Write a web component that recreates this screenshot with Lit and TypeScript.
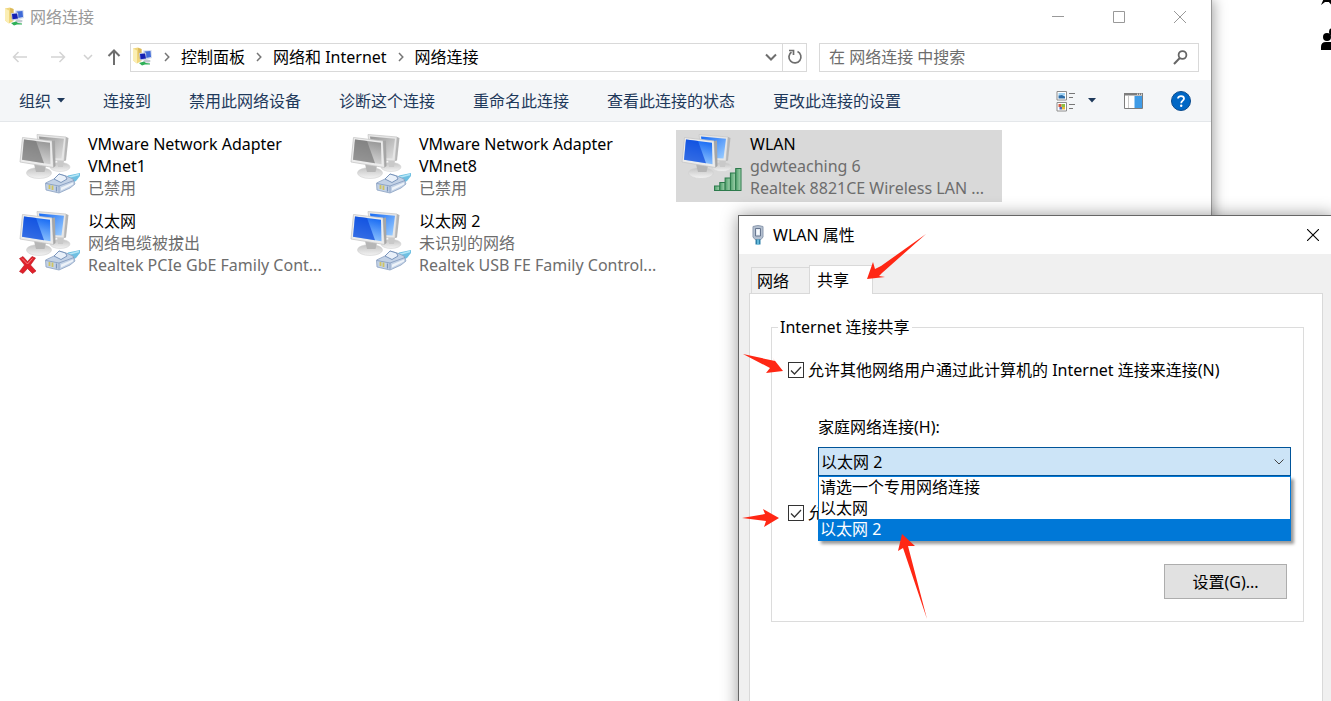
import { LitElement, html, svg, css, nothing } from "lit";
import { customElement, property } from "lit/decorators.js";

type IconKind = "disabled" | "unplugged" | "wired" | "wireless";

interface Connection {
  name: string;
  lines: string[];
  kind: IconKind;
  selected?: boolean;
}

const CONNECTIONS: Connection[] = [
  { name: "VMware Network Adapter VMnet1", lines: ["已禁用"], kind: "disabled" },
  { name: "VMware Network Adapter VMnet8", lines: ["已禁用"], kind: "disabled" },
  {
    name: "WLAN",
    lines: ["gdwteaching 6", "Realtek 8821CE Wireless LAN ..."],
    kind: "wireless",
    selected: true,
  },
  {
    name: "以太网",
    lines: ["网络电缆被拔出", "Realtek PCIe GbE Family Cont..."],
    kind: "unplugged",
  },
  {
    name: "以太网 2",
    lines: ["未识别的网络", "Realtek USB FE Family Control..."],
    kind: "wired",
  },
];

const COMMANDS = [
  "连接到",
  "禁用此网络设备",
  "诊断这个连接",
  "重命名此连接",
  "查看此连接的状态",
  "更改此连接的设置",
];

const folderIcon = html`<svg width="20" height="20" viewBox="0 0 20 20" aria-hidden="true">
  <path d="M0 1.500 5 0.500 8.500 2V14L4 16.500 0 13.500Z" fill="#f0d67c" />
  <path d="M0 1.500 4 3.500V16.500L0 13.500Z" fill="#fbeeb4" />
  <path d="M5 1 8.500 2V10L6 12Z" fill="#d9b75a" />
  <path d="M10 3.500 18.500 3 19 11 12 13Z" fill="#d5ddee" />
  <path d="M11.500 4.500 17.500 4 18 10 13 11Z" fill="#3f6ad8" />
  <path d="M6 6 13 5.500 13.500 12.500 7 13.500Z" fill="#c4cde4" />
  <path d="M7 7 12 6.500 13 11.500 7.500 12.300Z" fill="#1420b4" />
  <ellipse cx="14" cy="14" rx="3.500" ry="1.500" fill="#c3c9d0" />
  <path d="M6 16 11 14.500 13 16 17 16.500V17.500L12 17.500 9 18.500Z" fill="#2fb057" />
</svg>`;

const crumb = html`<svg class="crumb" width="6" height="10" viewBox="0 0 6 10" aria-hidden="true">
  <path d="M1 1 4.800 5 1 9" fill="none" stroke="#767676" stroke-width="1.500" />
</svg>`;

@customElement("connection-icon")
export class ConnectionIcon extends LitElement {
  @property() kind: IconKind = "wired";

  static styles = css`
    :host {
      display: block;
      flex: none;
    }
    svg {
      display: block;
    }
  `;

  private plug() {
    return svg`
      <path d="M44 50 50 43.500 62 41 62 44 58 49 50 53Z" fill="#6fc0e2"/>
      <path d="M50 45.500 61 42.500" stroke="#b4e6f7" stroke-width="1.500"/>
      <path d="M27.500 51 36 47 41 42 48 44 55 47 57 52 52 56 41 61 28 58Z" fill="#c3d2e6" stroke="#8aa1c2" stroke-width=".8"/>
      <path d="M36 47 41 42 47.500 44 49 47 43 50.500Z" fill="#e9f0f9" stroke="#6f8cb5" stroke-width=".9"/>
      <path d="M28 51.500 41 54 56 48.500M41 54V60.500" fill="none" stroke="#8098bd" stroke-width=".8"/>
      <path d="M43 55.500 55 50.500V52.500L43 58.500Z" fill="#eef3f9"/>
      <path d="M31.500 53V57M34.500 53.500V58" stroke="#cfc464" stroke-width="1.800"/>
      <path d="M38.500 54.500V59.500" stroke="#7c96bb" stroke-width="1.300"/>`;
  }

  private bars() {
    const tops = [54, 50.5, 46, 41, 36.5];
    return tops.map(
      (y, i) => svg`<rect x=${34.5 + i * 5.3} y=${y} width="5.300" height=${58.5 - y}
        fill="url(#bar)" stroke="#2d7a4c"/>`,
    );
  }

  render() {
    const off = this.kind === "disabled";
    const dark = off ? "#777" : "#0b46d8";
    const mid = off ? "#969696" : "#176af4";
    const light = off ? "#dedede" : "#9fd0ff";
    return html`<svg width="66" height="66" viewBox="0 0 66 66" aria-hidden="true">
      <defs>
        <linearGradient id="back" x1="0" y1="0" x2="1" y2="1">
          <stop offset="0" stop-color=${mid} />
          <stop offset="1" stop-color=${light} />
        </linearGradient>
        <linearGradient id="shine" x1="0.300" y1="1" x2="0.600" y2="0">
          <stop offset="0" stop-color=${light} />
          <stop offset="1" stop-color=${mid} />
        </linearGradient>
        <linearGradient id="stand" x1="0" y1="0" x2="0" y2="1">
          <stop offset="0" stop-color="#c2c2c2" />
          <stop offset="1" stop-color="#f3f3f3" />
        </linearGradient>
        <linearGradient id="bar" x1="0" y1="0" x2="1" y2="0">
          <stop offset="0" stop-color="#4fa06c" />
          <stop offset="1" stop-color="#a5d4b0" />
        </linearGradient>
      </defs>
      <ellipse cx="42" cy="35" rx="10" ry="4.500" fill="url(#stand)" stroke="#d4d4d4" stroke-width=".6" />
      <path d="M39 27 46 28 45 35 40 35Z" fill="#c9c9c9" />
      <path d="M19 2.500 48 5 46 29 22 28Z" fill="#e6e6e6" stroke="#c9c9c9" stroke-width=".8" />
      <path d="M48 5 50.500 6 48 28.500 46 29Z" fill="#b5b5b5" />
      <path d="M21 4.500 46 6.800 43.500 26.500 24 25.500Z" fill="url(#back)" />
      <ellipse cx="21" cy="41" rx="12.500" ry="5.500" fill="url(#stand)" stroke="#d0d0d0" stroke-width=".6" />
      <path d="M16 32 28 34 26.500 40 18 40Z" fill="#b6b6b6" />
      <path d="M4.500 5.500 34 9 35.500 35.500 2 30Z" fill="#ececec" stroke="#c6c6c6" stroke-width=".8" />
      <path d="M34 9 37 8.500 37.500 34 35.500 35.500Z" fill="#a6a6a6" />
      <path d="M6 7.500 32 10.800 32.500 32.300 4 27.800Z" fill="url(#shine)" />
      <path d="M6 7.500 18 9 26 31.200 4 27.800Z" fill=${dark} opacity=".7" />
      ${this.kind === "wireless" ? this.bars() : this.plug()}
      ${this.kind === "unplugged"
        ? svg`<path d="M1.500 49.500 5 47.500 9.500 52.500 14 47.500 17.500 49 12.500 56 18 62 14.500 64.500 9.500 59.500 5 64.500 1.500 62.500 6.500 56Z"
            fill="#e0202a" stroke="#b8141c" stroke-width=".6"/>
            <path d="M4 49.500 9.500 55 14.500 49.500" fill="none" stroke="#f47c80"/>`
        : nothing}
    </svg>`;
  }
}

@customElement("connections-window")
export class ConnectionsWindow extends LitElement {
  static styles = css`
    :host {
      display: flex;
      flex-direction: column;
      box-sizing: border-box;
      background: #fff;
      border-right: 1px solid #999;
      box-shadow: 2px 0 12px rgba(0, 0, 0, 0.35);
    }
    svg {
      display: block;
      flex: none;
    }
    button {
      font: inherit;
      color: inherit;
      background: none;
      border: 0;
      padding: 0;
      display: flex;
      align-items: center;
      justify-content: center;
    }
    .title {
      display: flex;
      align-items: center;
      height: 34px;
      padding: 0 3px 0 5px;
      gap: 5px;
      color: #999;
    }
    .title h1 {
      flex: 1;
      margin: 0;
      font-size: 16px;
      font-weight: 400;
    }
    .title button {
      width: 56px;
      height: 34px;
    }
    .nav {
      display: flex;
      align-items: center;
      height: 46px;
      padding: 0 12px;
    }
    .arrows {
      display: flex;
      align-items: center;
      width: 118px;
    }
    .back {
      width: 16px;
    }
    .forward {
      width: 16px;
      margin-left: 22px;
    }
    .recent {
      width: 10px;
      margin-left: 17px;
    }
    .up {
      width: 14px;
      margin-left: 14px;
    }
    .address {
      display: flex;
      align-items: center;
      flex: 1;
      min-width: 0;
      box-sizing: border-box;
      height: 29px;
      border: 1px solid #d9d9d9;
      padding-left: 2px;
      white-space: nowrap;
    }
    .address a {
      color: #000;
      text-decoration: none;
    }
    .crumb {
      margin: 0 11px;
    }
    .spacer {
      flex: 1;
    }
    .refresh {
      width: 24px;
      height: 27px;
      margin-left: 5px;
      border-left: 1px solid #d9d9d9;
    }
    .search {
      display: flex;
      align-items: center;
      box-sizing: border-box;
      width: 380px;
      height: 29px;
      margin-left: 12px;
      padding: 0 10px 0 9px;
      border: 1px solid #d9d9d9;
    }
    .search input {
      flex: 1;
      min-width: 0;
      border: 0;
      padding: 0;
      outline: 0;
      background: none;
      font: inherit;
    }
    .search input::placeholder {
      color: #6d6d6d;
      opacity: 1;
    }
    .toolbar {
      display: flex;
      align-items: center;
      gap: 38px;
      height: 41px;
      padding: 0 20px 0 19px;
      background: #f4f6f8;
      border-bottom: 1px solid #e4e7ea;
      color: #1e395b;
      white-space: nowrap;
    }
    .organize {
      gap: 6px;
    }
    .views {
      display: flex;
      align-items: center;
      gap: 28px;
      margin-left: auto;
    }
    .layout {
      gap: 12px;
    }
    .items {
      display: grid;
      grid-template-columns: repeat(auto-fill, 326px);
      gap: 5px;
      margin: 0;
      padding: 8px 14px;
      list-style: none;
    }
    .item {
      display: flex;
      box-sizing: border-box;
      height: 72px;
      padding: 2px 6px 0 4px;
      gap: 4px;
    }
    .selected {
      background: #d9d9d9;
    }
    .text {
      min-width: 0;
      padding-top: 1px;
      color: #6d6d6d;
    }
    .text p {
      margin: 0;
      white-space: nowrap;
    }
    .text .name {
      color: #000;
      white-space: normal;
    }
  `;

  render() {
    return html`
      <header class="title">
        ${folderIcon}
        <h1>网络连接</h1>
        <button aria-label="最小化">
          <svg width="12" height="12" viewBox="0 0 12 12"><path d="M0 5.500H12" stroke="#999" /></svg>
        </button>
        <button aria-label="最大化">
          <svg width="12" height="12" viewBox="0 0 12 12"><path d="M.5.5H11.500V11.500H.5Z" fill="none" stroke="#999" /></svg>
        </button>
        <button aria-label="关闭">
          <svg width="12" height="12" viewBox="0 0 12 12"><path d="M0 0 12 12M12 0 0 12" stroke="#999" /></svg>
        </button>
      </header>
      <nav class="nav">
        <div class="arrows">
          <button class="back" aria-label="后退">
            <svg width="16" height="12" viewBox="0 0 16 12"><path d="M15 6H1.500M6.500 1 1.500 6 6.500 11" fill="none" stroke="#d4d4d4" stroke-width="1.500" /></svg>
          </button>
          <button class="forward" aria-label="前进">
            <svg width="16" height="12" viewBox="0 0 16 12"><path d="M1 6H14.500M9.500 1 14.500 6 9.500 11" fill="none" stroke="#d4d4d4" stroke-width="1.500" /></svg>
          </button>
          <button class="recent" aria-label="最近位置">
            <svg width="10" height="6" viewBox="0 0 10 6"><path d="M1 1 5 5 9 1" fill="none" stroke="#d0d0d0" stroke-width="1.500" /></svg>
          </button>
          <button class="up" aria-label="上移">
            <svg width="14" height="16" viewBox="0 0 14 16"><path d="M7 16V1.500M1.500 7 7 1.500 12.500 7" fill="none" stroke="#6e6e6e" stroke-width="2" /></svg>
          </button>
        </div>
        <div class="address">
          ${folderIcon}${crumb}<a href="#panel">控制面板</a>${crumb}<a href="#internet">网络和 Internet</a>${crumb}<a href="#connections">网络连接</a>
          <span class="spacer"></span>
          <button aria-label="以前的位置">
            <svg width="12" height="8" viewBox="0 0 12 8"><path d="M1 1.500 6 6.500 11 1.500" fill="none" stroke="#6e6e6e" stroke-width="2" /></svg>
          </button>
          <button class="refresh" aria-label="刷新">
            <svg width="16" height="16" viewBox="0 0 16 16">
              <path d="M10.500 2.500A6 6 0 1 1 4.500 3" fill="none" stroke="#6e6e6e" stroke-width="1.700" />
              <path d="M2 1.500H6.500V6" fill="none" stroke="#6e6e6e" stroke-width="1.700" />
            </svg>
          </button>
        </div>
        <label class="search">
          <input type="text" placeholder="在 网络连接 中搜索" aria-label="搜索" />
          <svg width="15" height="15" viewBox="0 0 15 15">
            <circle cx="9.500" cy="5" r="3.900" fill="none" stroke="#666" stroke-width="1.800" />
            <path d="M6.800 8 1 14" stroke="#666" stroke-width="2" />
          </svg>
        </label>
      </nav>
      <div class="toolbar">
        <button class="organize">
          组织
          <svg width="8" height="5" viewBox="0 0 8 5"><path d="M0 0H8L4 4.500Z" fill="#1e395b" /></svg>
        </button>
        ${COMMANDS.map((c) => html`<button>${c}</button>`)}
        <div class="views">
          <button class="layout" aria-label="更改视图">
            <svg width="20" height="22" viewBox="0 0 20 22">
              <path d="M1 1.500H10.500V10H1ZM1 12.500H10.500V21H1Z" fill="#fff" stroke="#8c8c8c" />
              <path d="M2.500 3H9V5.500H2.500Z" fill="#9fd3f5" />
              <path d="M2.500 5.500 6 5 9 6.500V8.500H2.500Z" fill="#2b6ca8" />
              <path d="M2.500 14H5.500V17H2.500Z" fill="#d65a42" />
              <path d="M5.500 14H9V17H5.500Z" fill="#8fc045" />
              <path d="M3.500 17H6V19.500H3.500Z" fill="#4a66c8" />
              <path d="M6 17H9V19.500H6Z" fill="#e6b93c" />
              <path d="M13 3.500H19M13 7.500H17M13 14.500H19M13 18.500H17" stroke="#777" />
            </svg>
            <svg width="8" height="5" viewBox="0 0 8 5"><path d="M0 0H8L4 4.500Z" fill="#1e395b" /></svg>
          </button>
          <button aria-label="预览窗格">
            <svg width="19" height="16" viewBox="0 0 19 16">
              <path d="M.5 1H18.500V15.500H.5Z" fill="#fff" stroke="#7d7d7d" />
              <path d="M0 0H19V2.500H0Z" fill="#7d7d7d" />
              <path d="M13 1.200H14M15 1.200H16M17 1.200H18" stroke="#fff" />
              <path d="M4.500 3V15" stroke="#c9c9c9" />
              <path d="M10.500 3H18V15H10.500Z" fill="#3f9be6" />
            </svg>
          </button>
          <button aria-label="帮助">
            <svg width="20" height="20" viewBox="0 0 20 20">
              <circle cx="10" cy="10" r="9.500" fill="#0067c5" stroke="#0a4a8c" />
              <path d="M7 7.600C7 4.300 13 4.300 13 7.600 13 9.700 10.200 9.700 10.200 12.200" fill="none" stroke="#fff" stroke-width="1.800" />
              <circle cx="10.200" cy="14.800" r="1.200" fill="#fff" />
            </svg>
          </button>
        </div>
      </div>
      <ul class="items">
        ${CONNECTIONS.map(
          (c) => html`<li class="item ${c.selected ? "selected" : ""}">
            <connection-icon .kind=${c.kind}></connection-icon>
            <div class="text">
              <p class="name">${c.name}</p>
              ${c.lines.map((l) => html`<p>${l}</p>`)}
            </div>
          </li>`,
        )}
      </ul>
    `;
  }
}

@customElement("properties-dialog")
export class PropertiesDialog extends LitElement {
  static styles = css`
    :host {
      display: flex;
      flex-direction: column;
      box-sizing: border-box;
      background: #f0f0f0;
      border: 1px solid #666;
      box-shadow: 0 0 16px rgba(0, 0, 0, 0.4);
      color: #000;
    }
    svg {
      display: block;
      flex: none;
    }
    button,
    select {
      font: inherit;
      color: inherit;
    }
    .title {
      display: flex;
      align-items: center;
      height: 38px;
      padding: 0 14px 0 12px;
      background: #fff;
    }
    .title h2 {
      flex: 1;
      margin: 0 0 0 8px;
      font-size: 16px;
      font-weight: 400;
    }
    .close {
      display: flex;
      padding: 0;
      border: 0;
      background: none;
    }
    .body {
      flex: 1;
      display: flex;
      flex-direction: column;
      padding: 11px 10px 10px;
    }
    .tabs {
      display: flex;
      align-items: flex-end;
      padding-left: 2px;
    }
    .tab {
      box-sizing: border-box;
      height: 26px;
      padding: 0 20px 0 5px;
      border: 1px solid #d9d9d9;
      border-width: 1px 0 0 1px;
      background: #f0f0f0;
      line-height: 22px;
    }
    .active {
      z-index: 1;
      height: 29px;
      margin-bottom: -1px;
      padding: 0 23px 0 7px;
      border-right-width: 1px;
      background: #fff;
    }
    .panel {
      flex: 1;
      padding: 22px 18px 22px 21px;
      border: 1px solid #d9d9d9;
      background: #fff;
    }
    fieldset {
      min-width: 0;
      margin: 0;
      padding: 21px 12px 22px 16px;
      border: 1px solid #dcdcdc;
    }
    legend {
      margin-left: -10px;
      padding: 0 2px;
    }
    .check {
      display: flex;
      align-items: center;
      gap: 4px;
    }
    .check input {
      appearance: none;
      flex: none;
      width: 16px;
      height: 16px;
      margin: 0;
      border: 1px solid #333;
      background: #fff
        url("data:image/svg+xml,%3Csvg xmlns='http://www.w3.org/2000/svg' viewBox='0 0 14 14'%3E%3Cpath d='M2 7.500 5.500 11 12 4' fill='none' stroke='%23333' stroke-width='1.300'/%3E%3C/svg%3E");
    }
    .home {
      display: flex;
      flex-direction: column;
      gap: 9px;
      margin: 35px 0 26px 30px;
    }
    .combo {
      position: relative;
    }
    select {
      appearance: none;
      display: block;
      box-sizing: border-box;
      width: 100%;
      height: 29px;
      padding: 0 2px;
      border: 1px solid #005499;
      border-radius: 0;
      outline: 0;
      background: #cce4f7
        url("data:image/svg+xml,%3Csvg xmlns='http://www.w3.org/2000/svg' viewBox='0 0 10 6'%3E%3Cpath d='M.5.5 5 5 9.500.5' fill='none' stroke='%23444'/%3E%3C/svg%3E")
        right 6px center / 10px 6px no-repeat;
    }
    .list {
      position: absolute;
      z-index: 2;
      top: 100%;
      left: 0;
      right: 0;
      margin: 0;
      padding: 0;
      border: 1px solid #0078d7;
      background: #fff;
      box-shadow: 3px 3px 3px rgba(0, 0, 0, 0.4);
      list-style: none;
      line-height: 21px;
    }
    .list li {
      padding: 0 1px;
    }
    .list .current {
      background: #0078d7;
      color: #fff;
    }
    .actions {
      display: flex;
      justify-content: flex-end;
      padding: 40px 4px 0 0;
    }
    .settings {
      width: 123px;
      height: 35px;
      padding: 0;
      border: 1px solid #adadad;
      background: #e1e1e1;
    }
  `;

  render() {
    return html`
      <header class="title">
        <svg width="14" height="20" viewBox="0 0 14 20" aria-hidden="true">
          <path d="M2 1.500Q7-.5 12 1.500V12L10 14.500H4L2 12Z" fill="#b4c0d0" stroke="#8d9bb0" />
          <path d="M4.500 3.500H9.500V11H4.500Z" fill="#e3eaf3" stroke="#67768f" />
          <path d="M7 5V9.500" stroke="#fff" stroke-width="1.500" />
          <path d="M4.500 14.500H9.500V19.500H4.500Z" fill="#2d7fa8" />
          <path d="M7 14.500V20" stroke="#79cbe8" stroke-width="1.500" />
        </svg>
        <h2>WLAN 属性</h2>
        <button class="close" aria-label="关闭">
          <svg width="12" height="12" viewBox="0 0 12 12"><path d="M0 0 12 12M12 0 0 12" stroke="#000" stroke-width="1.100" /></svg>
        </button>
      </header>
      <div class="body">
        <div class="tabs" role="tablist">
          <button class="tab" role="tab" aria-selected="false">网络</button>
          <button class="tab active" role="tab" aria-selected="true">共享</button>
        </div>
        <div class="panel" role="tabpanel">
          <fieldset>
            <legend>Internet 连接共享</legend>
            <label class="check">
              <input type="checkbox" checked />
              <span>允许其他网络用户通过此计算机的 Internet 连接来连接(N)</span>
            </label>
            <div class="home">
              <label for="home">家庭网络连接(H):</label>
              <div class="combo">
                <select id="home">
                  <option>请选一个专用网络连接</option>
                  <option>以太网</option>
                  <option selected>以太网 2</option>
                </select>
                <ul class="list" role="listbox" aria-label="家庭网络连接">
                  <li role="option">请选一个专用网络连接</li>
                  <li role="option">以太网</li>
                  <li class="current" role="option" aria-selected="true">以太网 2</li>
                </ul>
              </div>
            </div>
            <label class="check">
              <input type="checkbox" checked />
              <span>允</span>
            </label>
            <div class="actions"><button class="settings">设置(G)...</button></div>
          </fieldset>
        </div>
      </div>
    `;
  }
}

@customElement("app-root")
export class AppRoot extends LitElement {
  static styles = css`
    :host {
      display: block;
      position: relative;
      height: 100vh;
      overflow: hidden;
      background: #fff;
      font: 16px/22px "Noto Sans", "Noto Sans CJK SC", sans-serif;
    }
    connections-window {
      position: absolute;
      inset: 0 119px 0 0;
    }
    properties-dialog {
      position: absolute;
      inset: 215px -3px -60px 738px;
    }
    .people {
      position: absolute;
      top: -16px;
      right: -13px;
      display: flex;
      flex-direction: column;
      gap: 22px;
    }
    .marks {
      position: absolute;
      z-index: 3;
      top: 0;
      left: 0;
      pointer-events: none;
    }
  `;

  render() {
    return html`
      <div class="people" aria-hidden="true">
        <svg width="24" height="22" viewBox="0 0 24 22">
          <path d="M12 2 16 10H8ZM5 12 9 14 11 18H5L1 21Z" />
          <path d="M8 12H20L23 20 12 21.500 8 17Z" />
        </svg>
        <svg width="24" height="22" viewBox="0 0 24 22">
          <circle cx="7" cy="9" r="4" />
          <path d="M1 22V19Q1 14 6 14H11Q15 14 15 19V22Z" />
          <circle cx="13" cy="4" r="4" />
          <path d="M14 10H18Q23 10 23 15V17H17Q16 12 12 12Z" />
        </svg>
      </div>
      <connections-window></connections-window>
      <properties-dialog></properties-dialog>
      <svg class="marks" width="1331" height="701" viewBox="0 0 1331 701" aria-hidden="true">
        <g fill="#ff2714">
          <path d="M926 234 882 273 879 276 885 277 867 279 873 262 875 269 881 266Z" />
          <path d="M743 354 775 361 772 357 783 371 766 373 770 368Z" />
          <path d="M742 518 765 514 763 509 779 518 764 527 766 521Z" />
          <path d="M902 534 915 546 908 546 927 619 903 548 898 551Z" />
        </g>
      </svg>
    `;
  }
}
